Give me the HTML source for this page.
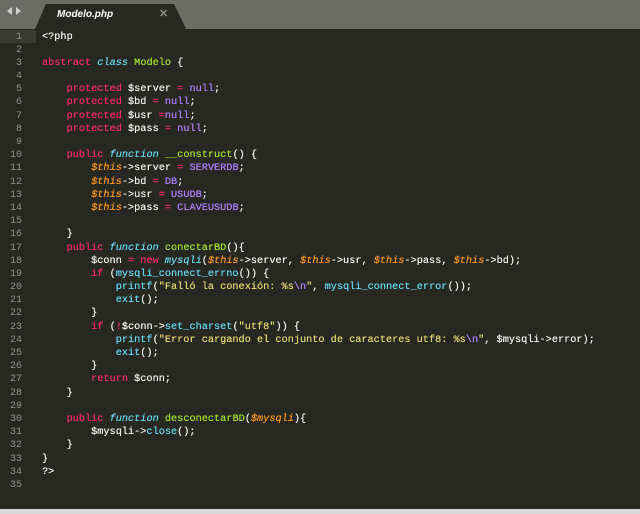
<!DOCTYPE html>
<html><head><meta charset="utf-8"><style>
body{margin:0;width:640px;height:514px;background:#272822;overflow:hidden;position:relative;font-family:"Liberation Mono",monospace;}
#bar{position:absolute;left:0;top:0;width:640px;height:29px;background:#6b6c66;}
#tab{position:absolute;left:0;top:0}
.tt{position:absolute;left:57px;top:9px;font:italic bold 10px "Liberation Sans",sans-serif;color:#fff;}
.x{position:absolute;left:159px;top:7px;font:bold 11px "Liberation Sans",sans-serif;color:#8f908a;}
#bot{position:absolute;left:0;top:509px;width:640px;height:5px;background:#d8d8d8;}
#hl{position:absolute;left:0;top:30px;width:36px;height:13px;background:#3a3b33;}
#g{position:absolute;left:0;top:30.5px;width:22px;text-align:right;color:#8f908a;font-size:10px;line-height:13.18px;white-space:pre;}
#c{position:absolute;left:42px;top:30.5px;color:#f8f8f2;font-size:10.24px;line-height:13.18px;white-space:pre;text-shadow:0 0 0.4px currentColor;}
.k{color:#f92672}.i{color:#66d9ef;font-style:italic}.f{color:#a6e22e}.n{color:#ae81ff}.s{color:#e6db74}.t{color:#fd971f;font-style:italic}.b{color:#66d9ef}
</style></head><body>
<div id="bar"></div>
<svg id="tab" width="200" height="30"><path d="M35 29 L46 4 L174 4 L186 29 Z" fill="#272822"/><path d="M7 11 L12 7 L12 15Z M16 7 L21 11 L16 15Z" fill="#d0d0d0"/></svg>
<div class="tt">Modelo.php</div><div class="x">✕</div>
<div id="hl"></div>
<div id="g">1
2
3
4
5
6
7
8
9
10
11
12
13
14
15
16
17
18
19
20
21
22
23
24
25
26
27
28
29
30
31
32
33
34
35</div>
<div id="c">&lt;?php

<span class="k">abstract</span> <span class="i">class</span> <span class="f">Modelo</span> {

    <span class="k">protected</span> $server <span class="k">=</span> <span class="n">null</span>;
    <span class="k">protected</span> $bd <span class="k">=</span> <span class="n">null</span>;
    <span class="k">protected</span> $usr <span class="k">=</span><span class="n">null</span>;
    <span class="k">protected</span> $pass <span class="k">=</span> <span class="n">null</span>;

    <span class="k">public</span> <span class="i">function</span> <span class="f">__construct</span>() {
        <span class="t">$this</span>-&gt;server <span class="k">=</span> <span class="n">SERVERDB</span>;
        <span class="t">$this</span>-&gt;bd <span class="k">=</span> <span class="n">DB</span>;
        <span class="t">$this</span>-&gt;usr <span class="k">=</span> <span class="n">USUDB</span>;
        <span class="t">$this</span>-&gt;pass <span class="k">=</span> <span class="n">CLAVEUSUDB</span>;

    }
    <span class="k">public</span> <span class="i">function</span> <span class="f">conectarBD</span>(){
        $conn <span class="k">=</span> <span class="k">new</span> <span class="i">mysqli</span>(<span class="t">$this</span>-&gt;server, <span class="t">$this</span>-&gt;usr, <span class="t">$this</span>-&gt;pass, <span class="t">$this</span>-&gt;bd);
        <span class="k">if</span> (<span class="b">mysqli_connect_errno</span>()) {
            <span class="b">printf</span>(<span class="s">"Falló la conexión: %s</span><span class="n">\n</span><span class="s">"</span>, <span class="b">mysqli_connect_error</span>());
            <span class="b">exit</span>();
        }
        <span class="k">if</span> (<span class="k">!</span>$conn-&gt;<span class="b">set_charset</span>(<span class="s">"utf8"</span>)) {
            <span class="b">printf</span>(<span class="s">"Error cargando el conjunto de caracteres utf8: %s</span><span class="n">\n</span><span class="s">"</span>, $mysqli-&gt;error);
            <span class="b">exit</span>();
        }
        <span class="k">return</span> $conn;
    }

    <span class="k">public</span> <span class="i">function</span> <span class="f">desconectarBD</span>(<span class="t">$mysqli</span>){
        $mysqli-&gt;<span class="b">close</span>();
    }
}
?&gt;
</div>
<div id="bot"></div>
</body></html>
